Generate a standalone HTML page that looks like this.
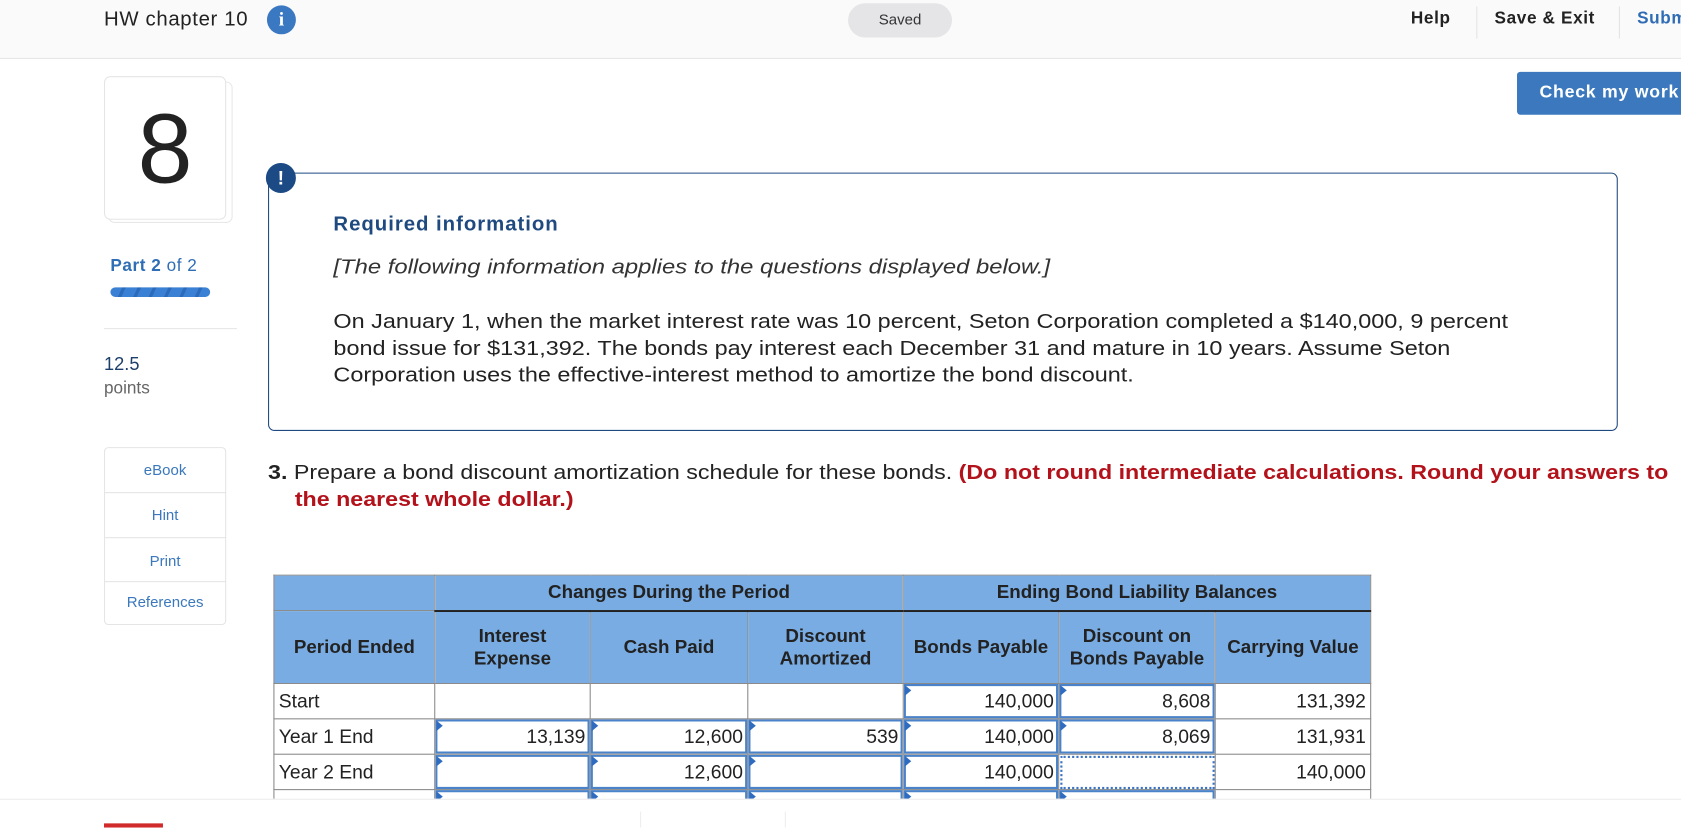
<!DOCTYPE html>
<html><head><meta charset="utf-8"><style>
*{margin:0;padding:0;box-sizing:border-box}
html,body{width:1681px;height:828px;overflow:hidden;background:#fff;font-family:"Liberation Sans",sans-serif;color:#222}
#w{position:absolute;left:0;top:0;width:1568px;height:772px;transform:scale(1.0721);transform-origin:0 0;overflow:hidden}
.a{position:absolute;white-space:nowrap}
.hdr{position:absolute;left:0;top:0;width:1568px;height:55px;background:#fafafa;border-bottom:1px solid #e6e6e6}
table{position:absolute;left:255px;top:536px;border-collapse:collapse;font-size:18px;table-layout:fixed}
td{border:1px solid #8a8a8a;height:33px;padding:0 4px;position:relative}
.h td{background:#78ace3;font-weight:bold;text-align:center;color:#222;line-height:21px;font-size:17.5px}
.r{text-align:right}
.in{box-shadow:inset 0 0 0 2px #4a83c9}
.in::before{content:"";position:absolute;left:1px;top:1px;border-left:6px solid #2f6cc0;border-top:5px solid transparent;border-bottom:5px solid transparent}
.dot{outline:2px dotted #3a74c4;outline-offset:-3px}
.t{font-size:19px;transform-origin:0 0}
</style></head><body><div id="w">
<div class="hdr"></div>
<div class="a" style="left:97px;top:8px;font-size:19px;color:#222;letter-spacing:0.6px">HW chapter 10</div>
<div class="a" style="left:249px;top:5px;width:27px;height:27px;border-radius:50%;background:#3b78c2;color:#fff;font:bold 18px 'Liberation Serif',serif;text-align:center;line-height:27px">i</div>
<div class="a" style="left:791px;top:3px;width:97px;height:32px;border-radius:16px;background:#e5e5e8;font-size:14px;color:#333;text-align:center;line-height:30px">Saved</div>
<div class="a" style="left:1316px;top:9px;font-size:16px;font-weight:bold;letter-spacing:0.6px">Help</div>
<div class="a" style="left:1377px;top:6px;width:1px;height:30px;background:#e3e3e3"></div>
<div class="a" style="left:1394px;top:9px;font-size:16px;font-weight:bold;letter-spacing:0.6px">Save &amp; Exit</div>
<div class="a" style="left:1510px;top:6px;width:1px;height:30px;background:#e3e3e3"></div>
<div class="a" style="left:1527px;top:9px;font-size:16px;font-weight:bold;color:#2f6cb5;letter-spacing:0.6px">Submit</div>
<div class="a" style="left:1415px;top:67px;width:170px;height:40px;border-radius:3px;background:#3b78bd;color:#fff;font-size:16.5px;font-weight:bold;line-height:39px;padding-left:21px;letter-spacing:0.7px">Check my work</div>

<div class="a" style="left:101px;top:76px;width:116px;height:132px;border:1px solid #e8e8e8;border-radius:6px;background:#fff"></div>
<div class="a" style="left:97px;top:71px;width:114px;height:134px;border:1px solid #e5e5e5;border-radius:6px;background:#fff;font-size:92px;text-align:center;line-height:134px;color:#222">8</div>
<div class="a" style="left:103px;top:240px;font-size:16px;color:#2f6db5;letter-spacing:0.5px"><b>Part 2</b> of 2</div>
<div class="a" style="left:103px;top:268px;width:93px;height:9px;border-radius:5px;background:repeating-linear-gradient(115deg,#3a80d4 0 10px,#2c6bbb 10px 13px)"></div>
<div class="a" style="left:97px;top:306px;width:124px;height:1px;background:#e6e6e6"></div>
<div class="a" style="left:97px;top:330px;font-size:17px;color:#1d3f6b">12.5</div>
<div class="a" style="left:97px;top:354px;font-size:16px;color:#666">points</div>
<div class="a" style="left:97px;top:417px;width:114px;height:166px;border:1px solid #e5e5e5;border-radius:4px"></div>
<div class="a" style="left:97px;top:459px;width:114px;height:1px;background:#e5e5e5"></div>
<div class="a" style="left:97px;top:501px;width:114px;height:1px;background:#e5e5e5"></div>
<div class="a" style="left:97px;top:542px;width:114px;height:1px;background:#e5e5e5"></div>
<div class="a" style="left:97px;top:430px;width:114px;text-align:center;font-size:14px;color:#3b78bd">eBook</div>
<div class="a" style="left:97px;top:472px;width:114px;text-align:center;font-size:14px;color:#3b78bd">Hint</div>
<div class="a" style="left:97px;top:515px;width:114px;text-align:center;font-size:14px;color:#3b78bd">Print</div>
<div class="a" style="left:97px;top:553px;width:114px;text-align:center;font-size:14px;color:#3b78bd">References</div>

<div class="a" style="left:250px;top:161px;width:1259px;height:241px;border:1px solid #1f4a80;border-radius:6px"></div>
<div class="a" style="left:248px;top:152px;width:28px;height:28px;border-radius:50%;background:#1b4a84;color:#fff;font-weight:bold;font-size:18px;text-align:center;line-height:28px">!</div>
<div class="a" style="left:311px;top:199px;font-size:19px;font-weight:bold;color:#1f4a80;letter-spacing:0.9px">Required information</div>
<div class="a t" style="left:311px;top:239px;font-style:italic;color:#333;transform:scaleX(1.17)">[The following information applies to the questions displayed below.]</div>
<div class="a t" style="left:311px;top:288px;line-height:25px;color:#222;transform:scaleX(1.15)">On January 1, when the market interest rate was 10 percent, Seton Corporation completed a $140,000, 9 percent<br>bond issue for $131,392. The bonds pay interest each December 31 and mature in 10 years. Assume Seton<br>Corporation uses the effective-interest method to amortize the bond discount.</div>
<div class="a t" style="left:250px;top:429px;line-height:25px;transform:scaleX(1.14)"><b>3.</b> Prepare a bond discount amortization schedule for these bonds. <b style="color:#b3121b">(Do not round intermediate calculations. Round your answers to</b></div>
<div class="a t" style="left:275px;top:454px;line-height:25px;transform:scaleX(1.14)"><b style="color:#b3121b">the nearest whole dollar.)</b></div>

<table>
<colgroup><col style="width:150px"><col style="width:145px"><col style="width:147px"><col style="width:145px"><col style="width:145px"><col style="width:146px"><col style="width:145px"></colgroup>
<tr class="h"><td></td><td colspan="3" style="border-bottom:2px solid #222">Changes During the Period</td><td colspan="3" style="border-bottom:2px solid #222">Ending Bond Liability Balances</td></tr>
<tr class="h" style="height:68px"><td>Period Ended</td><td>Interest<br>Expense</td><td>Cash Paid</td><td>Discount<br>Amortized</td><td>Bonds Payable</td><td>Discount on<br>Bonds Payable</td><td>Carrying Value</td></tr>
<tr><td>Start</td><td></td><td></td><td></td><td class="r in">140,000</td><td class="r in">8,608</td><td class="r">131,392</td></tr>
<tr><td>Year 1 End</td><td class="r in">13,139</td><td class="r in">12,600</td><td class="r in">539</td><td class="r in">140,000</td><td class="r in">8,069</td><td class="r">131,931</td></tr>
<tr><td>Year 2 End</td><td class="r in"></td><td class="r in">12,600</td><td class="r in"></td><td class="r in">140,000</td><td class="r dot"></td><td class="r">140,000</td></tr>
<tr><td>Year 3 End</td><td class="r in"></td><td class="r in">12,600</td><td class="r in"></td><td class="r in">140,000</td><td class="r in"></td><td class="r">140,000</td></tr>
</table>
<div class="a" style="left:0;top:745px;width:1568px;height:27px;background:#fff;border-top:1px solid #ececec"></div>
<div class="a" style="left:597px;top:757px;width:1px;height:15px;background:#eee"></div>
<div class="a" style="left:732px;top:757px;width:1px;height:15px;background:#eee"></div>
<div class="a" style="left:97px;top:768px;width:55px;height:4px;background:#d12a2a"></div>
</div></body></html>
